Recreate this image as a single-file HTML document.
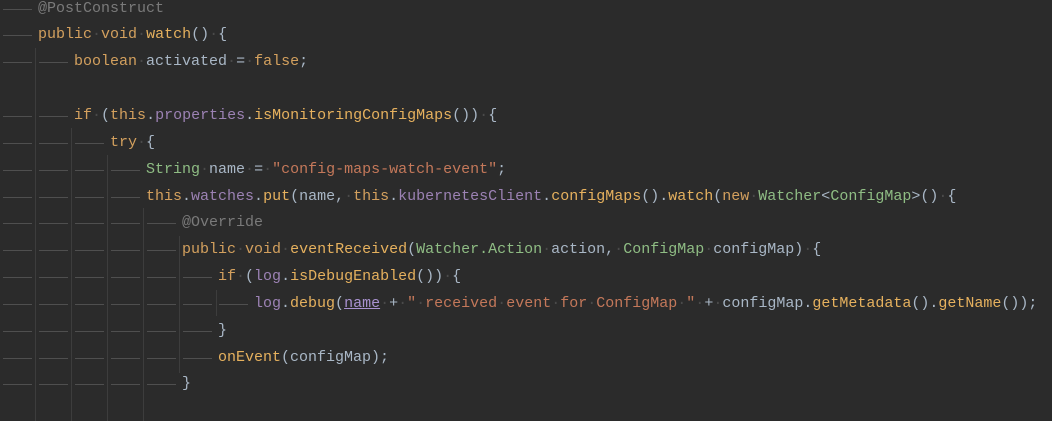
<!DOCTYPE html>
<html><head><meta charset="utf-8"><style>
html,body{margin:0;padding:0;background:#2b2b2b;width:1052px;height:421px;overflow:hidden;position:relative}
.code{position:absolute;left:2px;top:-4.4px;font-family:"Liberation Mono",monospace;font-size:15px;line-height:26.85px;color:#a9b7c6}
.l{height:26.85px;white-space:pre}
.t{display:inline-block;width:36px;height:13px;vertical-align:top;position:relative}
.t:after{content:"";position:absolute;left:1px;width:29px;top:13px;height:1px;background:#4f4f4f}
.k{color:#d3a05e}.m{color:#e6b15e}.ty{color:#8fbd84}.s{color:#c4785a}.f{color:#9c82b4}.a{color:#7a7a7a}
.u{color:#a992d0;text-decoration:underline}
.d{color:#4a4a4a}
.g{position:absolute;width:1px;background:#3d3d3d}
</style></head><body>
<div class="g" style="left:35px;top:48px;height:373px"></div>
<div class="g" style="left:71px;top:128px;height:293px"></div>
<div class="g" style="left:107px;top:155px;height:266px"></div>
<div class="g" style="left:143px;top:208px;height:213px"></div>
<div class="g" style="left:179px;top:236px;height:137px"></div>
<div class="g" style="left:216px;top:290px;height:26px"></div>
<div class="code"><div class="l"><span class="t"></span><span class="a">@PostConstruct</span></div><div class="l"><span class="t"></span><span class="k">public</span><span class="d">·</span><span class="k">void</span><span class="d">·</span><span class="m">watch</span>()<span class="d">·</span>{</div><div class="l"><span class="t"></span><span class="t"></span><span class="k">boolean</span><span class="d">·</span>activated<span class="d">·</span>=<span class="d">·</span><span class="k">false</span>;</div><div class="l"></div><div class="l"><span class="t"></span><span class="t"></span><span class="k">if</span><span class="d">·</span>(<span class="k">this</span>.<span class="f">properties</span>.<span class="m">isMonitoringConfigMaps</span>())<span class="d">·</span>{</div><div class="l"><span class="t"></span><span class="t"></span><span class="t"></span><span class="k">try</span><span class="d">·</span>{</div><div class="l"><span class="t"></span><span class="t"></span><span class="t"></span><span class="t"></span><span class="ty">String</span><span class="d">·</span>name<span class="d">·</span>=<span class="d">·</span><span class="s">"config-maps-watch-event"</span>;</div><div class="l"><span class="t"></span><span class="t"></span><span class="t"></span><span class="t"></span><span class="k">this</span>.<span class="f">watches</span>.<span class="m">put</span>(name,<span class="d">·</span><span class="k">this</span>.<span class="f">kubernetesClient</span>.<span class="m">configMaps</span>().<span class="m">watch</span>(<span class="k">new</span><span class="d">·</span><span class="ty">Watcher</span>&lt;<span class="ty">ConfigMap</span>&gt;()<span class="d">·</span>{</div><div class="l"><span class="t"></span><span class="t"></span><span class="t"></span><span class="t"></span><span class="t"></span><span class="a">@Override</span></div><div class="l"><span class="t"></span><span class="t"></span><span class="t"></span><span class="t"></span><span class="t"></span><span class="k">public</span><span class="d">·</span><span class="k">void</span><span class="d">·</span><span class="m">eventReceived</span>(<span class="ty">Watcher.Action</span><span class="d">·</span>action,<span class="d">·</span><span class="ty">ConfigMap</span><span class="d">·</span>configMap)<span class="d">·</span>{</div><div class="l"><span class="t"></span><span class="t"></span><span class="t"></span><span class="t"></span><span class="t"></span><span class="t"></span><span class="k">if</span><span class="d">·</span>(<span class="f">log</span>.<span class="m">isDebugEnabled</span>())<span class="d">·</span>{</div><div class="l"><span class="t"></span><span class="t"></span><span class="t"></span><span class="t"></span><span class="t"></span><span class="t"></span><span class="t"></span><span class="f">log</span>.<span class="m">debug</span>(<span class="u">name</span><span class="d">·</span>+<span class="d">·</span><span class="s">"<span class="d">·</span>received<span class="d">·</span>event<span class="d">·</span>for<span class="d">·</span>ConfigMap<span class="d">·</span>"</span><span class="d">·</span>+<span class="d">·</span>configMap.<span class="m">getMetadata</span>().<span class="m">getName</span>());</div><div class="l"><span class="t"></span><span class="t"></span><span class="t"></span><span class="t"></span><span class="t"></span><span class="t"></span>}</div><div class="l"><span class="t"></span><span class="t"></span><span class="t"></span><span class="t"></span><span class="t"></span><span class="t"></span><span class="m">onEvent</span>(configMap);</div><div class="l"><span class="t"></span><span class="t"></span><span class="t"></span><span class="t"></span><span class="t"></span>}</div></div>
</body></html>
